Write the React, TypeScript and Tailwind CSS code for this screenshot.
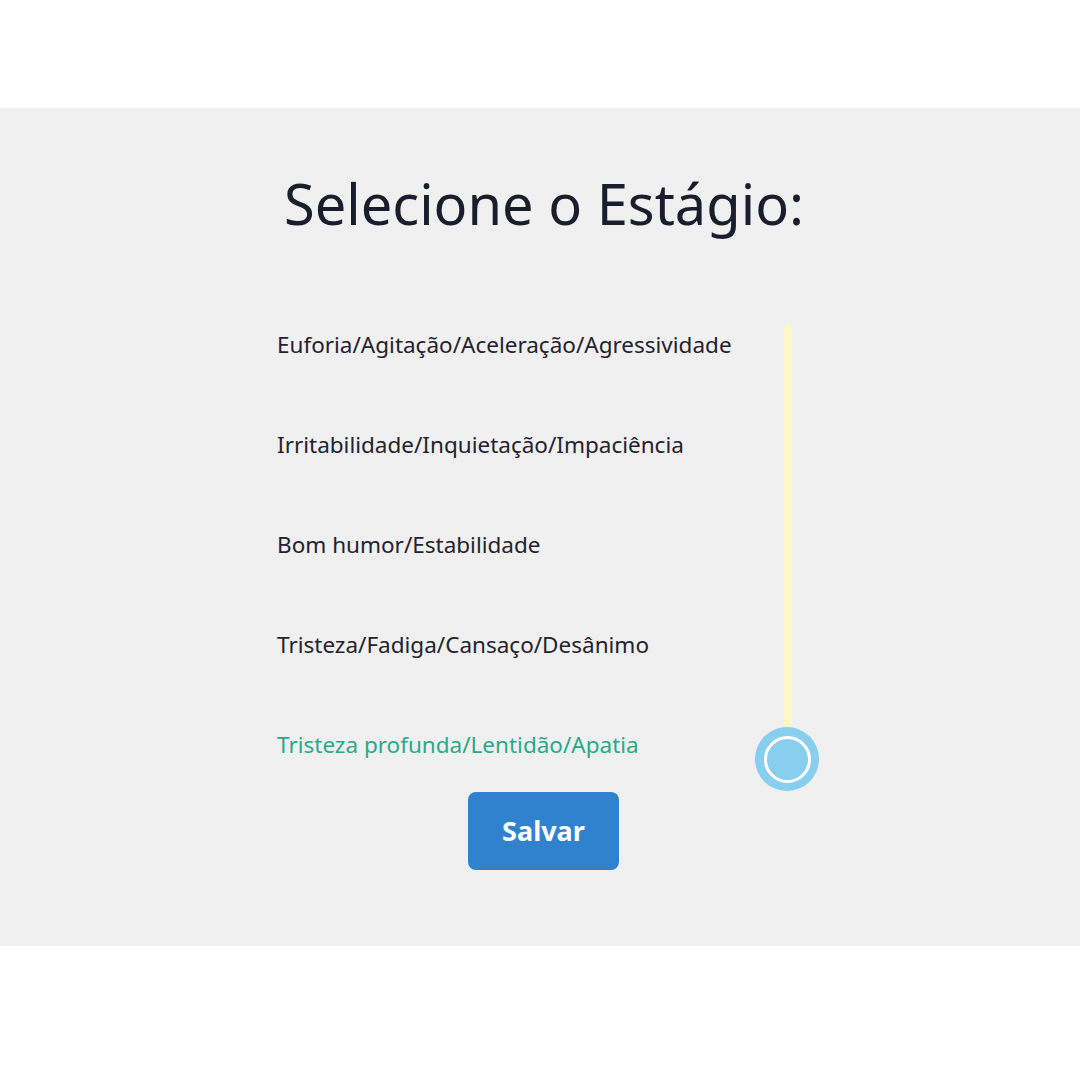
import React from "react";

const labels = [
  "Euforia/Agitação/Aceleração/Agressividade",
  "Irritabilidade/Inquietação/Impaciência",
  "Bom humor/Estabilidade",
  "Tristeza/Fadiga/Cansaço/Desânimo",
  "Tristeza profunda/Lentidão/Apatia",
];

export default function App() {
  return (
    <div className="w-[1080px] h-[1080px] bg-white flex flex-col" style={{ fontFamily: '"Noto Sans", "Open Sans", sans-serif' }}>
      <div className="h-[108px]" />
      <div className="h-[838px] bg-[#f0f0f0] flex flex-col pt-[58px]">
        <h1 className="text-center text-[56px] leading-[74px] text-[#1a1d2b] pl-[8px]">Selecione o Estágio:</h1>
        <div className="flex justify-center mt-[55px] pl-[16px]">
          <div className="w-[478px] flex flex-col">
            {labels.map((l, i) => (
              <div key={l} className={`h-[100px] flex items-center text-[22.5px] ${i === 4 ? "text-[#2ba98b]" : "text-[#24222e]"}`}>
                {l}
              </div>
            ))}
          </div>
          <div className="relative w-[64px] h-[500px]">
            <div className="absolute left-[29px] top-[30px] w-[8px] h-[434px] rounded-full bg-[#fff8c6]" />
            <div className="absolute left-0 top-[432px] w-[64px] h-[64px] rounded-full bg-[#88ceee] flex items-center justify-center">
              <div className="w-[47px] h-[47px] rounded-full border-[3.5px] border-white" />
            </div>
          </div>
        </div>
        <div className="flex justify-center pl-[7px] -mt-[3px]">
          <button className="w-[151px] h-[78px] rounded-lg bg-[#3182ce] text-white text-[27px] font-bold">Salvar</button>
        </div>
      </div>
    </div>
  );
}
